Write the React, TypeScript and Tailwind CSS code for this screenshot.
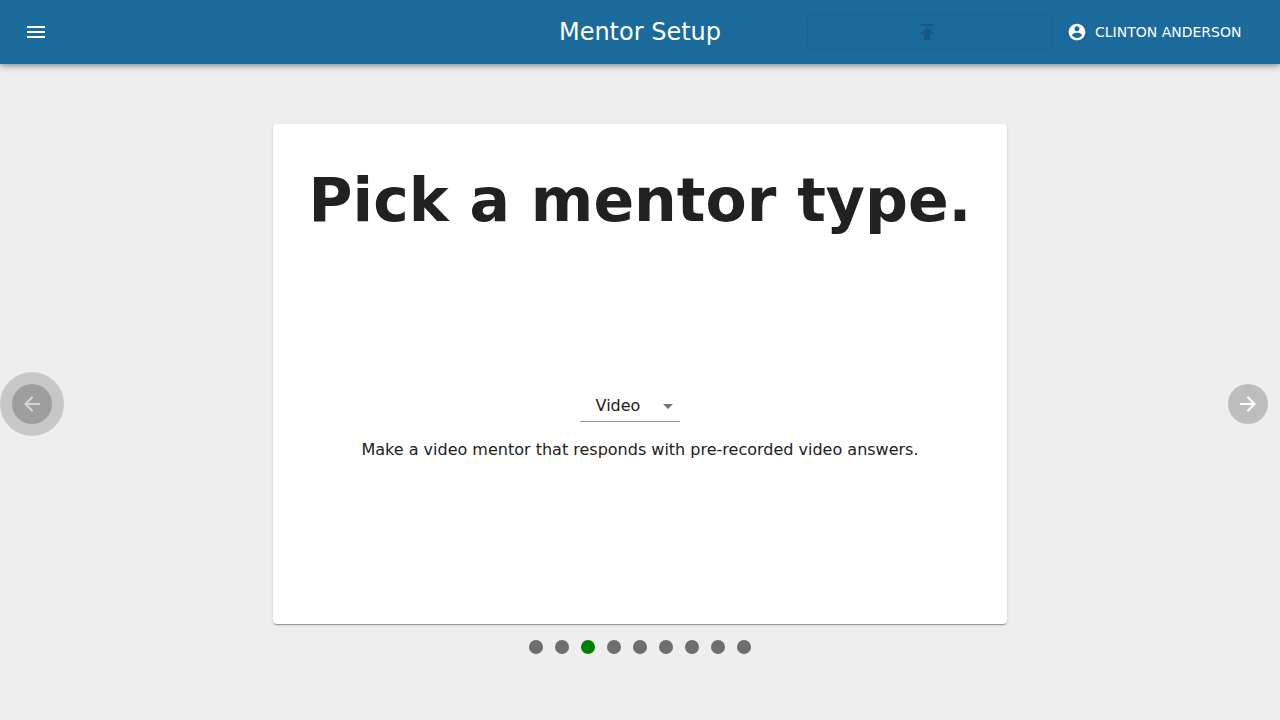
import { useState } from "react";

const STEPS = ["Welcome", "Mentor info", "Mentor type", "Chat", "Subjects", "Recording", "Idle", "Questions", "Finish"];

const MENTOR_TYPES = [
  { value: "Video", text: "Make a video mentor that responds with pre-recorded video answers." },
  { value: "Chat", text: "Make a text-only mentor that responds with chat bubbles." },
];

function Icon({ d, className }: { d: string; className: string }) {
  return (
    <svg viewBox="0 0 24 24" fill="currentColor" aria-hidden="true" className={className}>
      <path d={d} />
    </svg>
  );
}

function Header() {
  return (
    <header className="relative flex h-16 items-center bg-[#1b6a9c] px-6 text-white shadow-[0_2px_4px_-1px_rgba(0,0,0,0.2),0_4px_5px_0_rgba(0,0,0,0.14),0_1px_10px_0_rgba(0,0,0,0.12)]">
      <div className="flex flex-1 items-center">
        <button type="button" aria-label="Menu">
          <Icon className="size-6" d="M3 18h18v-2H3v2zm0-5h18v-2H3v2zm0-7v2h18V6H3z" />
        </button>
      </div>
      <h1 className="text-2xl">Mentor Setup</h1>
      <div className="flex flex-1 items-center justify-end gap-1.5">
        <button
          type="button"
          disabled
          aria-label="Publish"
          className="flex h-9 w-[246px] items-center justify-center rounded border border-black/7 text-black/17"
        >
          <Icon className="mr-1.5 size-6" d="M5 4v2h14V4H5zm0 10h4v6h6v-6h4l-7-7-7 7z" />
        </button>
        <button type="button" className="flex min-w-[197px] items-center gap-2 px-2 py-1.5 text-sm uppercase">
          <Icon
            className="size-5"
            d="M12 2C6.48 2 2 6.48 2 12s4.480 10 10 10 10-4.480 10-10S17.520 2 12 2zm0 3c1.660 0 3 1.340 3 3s-1.340 3-3 3-3-1.340-3-3 1.340-3 3-3zm0 14.200c-2.500 0-4.710-1.280-6-3.220.030-1.990 4-3.080 6-3.080 1.990 0 5.970 1.090 6 3.080-1.290 1.940-3.500 3.220-6 3.220z"
          />
          Clinton Anderson
        </button>
      </div>
    </header>
  );
}

export default function App() {
  const [step, setStep] = useState(2);
  const [type, setType] = useState("Video");
  const description = MENTOR_TYPES.find((t) => t.value === type)?.text;

  return (
    <div className="flex min-h-screen flex-col bg-[#eeeeee] font-['DejaVu_Sans',sans-serif] text-[#212121]">
      <Header />
      <main className="flex flex-1 items-center justify-between px-3 pt-6">
        <button
          type="button"
          aria-label="Previous step"
          onClick={() => setStep(Math.max(0, step - 1))}
          className="relative flex size-10 shrink-0 items-center justify-center rounded-full bg-[#bdbdbd] text-white"
        >
          <Icon className="size-6" d="M20 11H7.830l5.590-5.590L12 4l-8 8 8 8 1.410-1.410L7.830 13H20v-2z" />
          <span className="absolute -inset-3 rounded-full bg-black/16" />
        </button>

        <section className="w-full max-w-[734px]">
          <div className="flex min-h-[500px] flex-col items-center rounded bg-white px-8 pt-10 shadow-[0_2px_1px_-1px_rgba(0,0,0,0.2),0_1px_1px_0_rgba(0,0,0,0.14),0_1px_3px_0_rgba(0,0,0,0.12)]">
            <h2 className="text-center text-6xl leading-[72px] font-bold">Pick a mentor type.</h2>
            <div className="flex flex-1 flex-col items-center justify-center gap-4 pb-2">
              <div className="relative mr-5 w-[100px]">
                <select
                  aria-label="Mentor type"
                  value={type}
                  onChange={(e) => setType(e.target.value)}
                  className="h-8 w-full appearance-none border-b border-[#949494] pr-6 text-center text-base outline-none"
                >
                  {MENTOR_TYPES.map((t) => (
                    <option key={t.value}>{t.value}</option>
                  ))}
                </select>
                <Icon className="pointer-events-none absolute top-1 right-0 size-6 text-[#757575]" d="M7 10l5 5 5-5z" />
              </div>
              <p className="text-base">{description}</p>
            </div>
          </div>
          <nav aria-label="Steps" className="flex h-[60px] justify-center gap-3 pt-4">
            {STEPS.map((name, i) => (
              <button
                key={name}
                type="button"
                aria-label={name}
                onClick={() => setStep(i)}
                className={i === step ? "size-3.5 rounded-full bg-[#008000]" : "size-3.5 rounded-full bg-[#6e6e6e]"}
              />
            ))}
          </nav>
        </section>

        <button
          type="button"
          aria-label="Next step"
          onClick={() => setStep(Math.min(STEPS.length - 1, step + 1))}
          className="flex size-10 shrink-0 items-center justify-center rounded-full bg-[#bdbdbd] text-white"
        >
          <Icon className="size-6" d="M12 4l-1.410 1.410L16.170 11H4v2h12.170l-5.580 5.590L12 20l8-8z" />
        </button>
      </main>
    </div>
  );
}
